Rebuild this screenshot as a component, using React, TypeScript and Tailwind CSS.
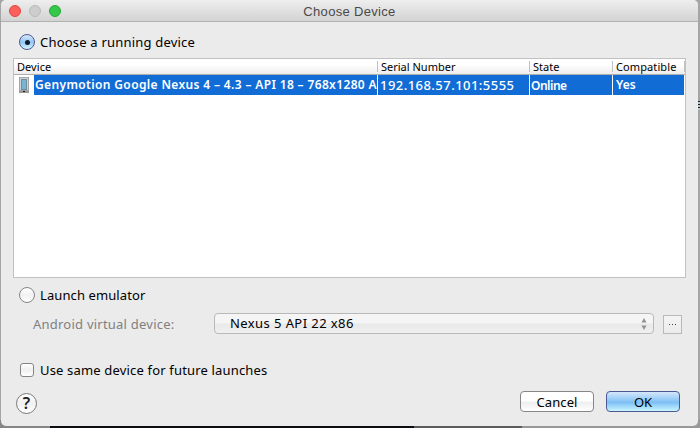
const headerCell = "h-[16px] pl-[3px] text-[11px] leading-[15px] whitespace-nowrap";

function Divider({ className = "" }: { className?: string }) {
  return <div className={`w-px shrink-0 ${className}`} />;
}

function TitleBar() {
  return (
    <div className="flex h-[22px] shrink-0 items-center border-b border-[#b1b1b1] bg-linear-to-b from-[#eeeeee] to-[#d3d3d3] pl-[8px]">
      <div className="flex w-[52px] gap-[8px]">
        <div className="size-[12px] rounded-full border border-[#e2463f] bg-[#fc605c]" />
        <div className="size-[12px] rounded-full border border-[#b9b9b9] bg-[#cdcdcd]" />
        <div className="size-[12px] rounded-full border border-[#24a934] bg-[#34c84a]" />
      </div>
      <div className="flex-1 pt-[2px] pr-[60px] text-center font-['Liberation_Sans',sans-serif] text-[13px] leading-[20px] tracking-[0.32px] text-[#4a4a4a]">
        Choose Device
      </div>
    </div>
  );
}

function PhoneIcon() {
  return (
    <svg width="10" height="16" viewBox="0 0 10 16" className="shrink-0" shapeRendering="crispEdges">
      <rect width="10" height="16" fill="#a3a3a3" />
      <rect x="1" y="1" width="8" height="12" fill="#d3d5d6" />
      <rect x="2" y="2" width="6" height="11" fill="#6a8e9d" />
      <rect x="3" y="3" width="4" height="9" fill="#79b5d2" />
      <rect y="14" width="10" height="2" fill="#989898" />
      <rect x="4" y="14" width="2" height="1" fill="#161616" />
    </svg>
  );
}

function DeviceTable() {
  return (
    <div className="ml-[12px] flex h-[220px] w-[673px] shrink-0 flex-col border border-[#c1c1c1] bg-white">
      <div className="flex h-[16px] shrink-0 items-center border-b border-[#aeaeae] bg-linear-to-b from-white from-40% to-[#ececec] text-black">
        <div className={`${headerCell} w-[363px] tracking-[0.05px]`}>Device</div>
        <Divider className="h-[11px] bg-[#c0c0c0]" />
        <div className={`${headerCell} w-[151px]`}>Serial Number</div>
        <Divider className="h-[11px] bg-[#c0c0c0]" />
        <div className={`${headerCell} w-[82px]`}>State</div>
        <Divider className="h-[11px] bg-[#c0c0c0]" />
        <div className={`${headerCell} w-[71px] tracking-[0.1px]`}>Compatible</div>
        <Divider className="h-[11px] bg-[#c0c0c0]" />
      </div>
      <div className="flex h-[20px] shrink-0 text-[12px] leading-[20px] font-semibold whitespace-nowrap text-white">
        <div className="flex w-[20px] items-center pl-[5px]">
          <PhoneIcon />
        </div>
        <div className="w-[343px] bg-[#116cd6] pl-px tracking-[0.36px]">
          Genymotion Google Nexus 4 – 4.3 – API 18 – 768x1280 A
        </div>
        <Divider className="bg-white" />
        <div className="w-[151px] bg-[#116cd6] pl-[2px] text-[13px] font-medium tracking-[0.46px]">192.168.57.101:5555</div>
        <Divider className="bg-white" />
        <div className="w-[82px] bg-[#116cd6] pl-px pt-px tracking-[-0.5px]">Online</div>
        <Divider className="bg-white" />
        <div className="w-[71px] bg-[#116cd6] pl-[3px]">Yes</div>
      </div>
    </div>
  );
}

function EmulatorSelect() {
  return (
    <div className="flex h-[21px] w-[440px] items-center justify-between rounded-[4px] border border-[#b9b9b9] bg-linear-to-b from-[#f5f5f5] from-45% via-[#e9e9e9] via-55% to-[#f0f0f0] pr-[6px] pl-[15px]">
      <span className="pb-px text-[13px] leading-[18px] tracking-[0.42px] text-black">Nexus 5 API 22 x86</span>
      <svg width="6" height="12" viewBox="0 0 6 12" fill="#929292">
        <path d="M3 0 5.5 4.5h-5zM3 12 .5 7.5h5z" />
      </svg>
    </div>
  );
}

export default function App() {
  return (
    <div className="relative h-[428px] w-[700px] overflow-hidden bg-[#a5a5a5] font-['Noto_Sans',sans-serif]">
      <div className="absolute bottom-0 left-0 flex h-[8px] w-full">
        <div className="w-[50px] bg-[#858585]" />
        <div className="w-[364px] bg-[#0b0c10]" />
        <div className="w-[108px] bg-[#5c5c5c]" />
        <div className="flex-1 bg-[#989898]" />
      </div>
      <div className="absolute top-[101px] right-0 h-[9px] w-[2px] bg-[repeating-linear-gradient(to_bottom,#222_0px,#222_1px,#b8c4c8_1px,#b8c4c8_3px)]" />
      <div className="relative ml-px flex h-[426px] w-[697px] flex-col overflow-hidden rounded-[5px] bg-[#ebebeb]">
        <TitleBar />
        <div className="flex h-[36px] shrink-0 items-center gap-[5px] pt-[4px] pl-[18px]">
          <div className="flex size-[16px] items-center justify-center rounded-full border border-[#4c5892] bg-linear-to-b from-[#dbe9f8] via-[#91c6f4] to-[#d5f5ff]">
            <div className="size-[5px] rounded-full bg-[#10182c]" />
          </div>
          <span className="text-[13px] leading-[18px] tracking-[0.2px] text-black">Choose a running device</span>
        </div>
        <DeviceTable />
        <div className="flex h-[35px] shrink-0 items-center gap-[5px] pl-[18px]">
          <div className="mb-[2px] size-[16px] rounded-full border border-[#858585] bg-linear-to-b from-white via-[#f1f1f1] to-white" />
          <span className="pb-[2px] text-[13px] leading-[18px] tracking-[0.1px] text-black">Launch emulator</span>
        </div>
        <div className="flex h-[21px] shrink-0 pl-[32px]">
          <span className="w-[181px] pt-[2px] text-[13px] leading-[18px] tracking-[0.23px] text-[#808080]">Android virtual device:</span>
          <EmulatorSelect />
          <div className="mt-[2px] ml-[9px] flex h-[19px] w-[19px] items-center justify-center gap-[2px] border border-[#b9b9b9] bg-linear-to-b from-[#f4f4f4] to-[#ececec]">
            <span className="size-px bg-[#444]" />
            <span className="size-px bg-[#444]" />
            <span className="size-px bg-[#444]" />
          </div>
        </div>
        <div className="mt-[27px] flex h-[18px] shrink-0 items-center gap-[6px] pl-[19px]">
          <div className="size-[14px] rounded-[3px] border border-[#858585] bg-linear-to-b from-white via-[#f0f0f0] to-white" />
          <span className="text-[13px] leading-[18px] tracking-[0.17px] text-black">Use same device for future launches</span>
        </div>
        <div className="mt-[12px] flex h-[24px] shrink-0 items-start pl-[15px]">
          <div className="mt-[2px] flex size-[21px] items-center justify-center rounded-full border border-[#797979] bg-linear-to-b from-white via-[#f1f1f1] to-white pb-px text-[16px] leading-[18px] font-semibold text-[#222]">
            ?
          </div>
          <div className="ml-[483px] flex h-[21px] w-[74px] items-center justify-center rounded-[4px] border border-[#878787] bg-linear-to-b from-white from-45% via-[#efefef] via-55% to-white text-[13px] leading-[18px] tracking-[0.1px] text-black">
            Cancel
          </div>
          <div className="ml-[12px] flex h-[21px] w-[74px] items-center justify-center rounded-[4px] border border-[#4c5892] bg-linear-to-b from-[#d5e7fa] from-0% via-[#7dbff5] via-55% to-[#c9f6ff] text-[13px] leading-[18px] text-black">
            OK
          </div>
        </div>
      </div>
    </div>
  );
}
